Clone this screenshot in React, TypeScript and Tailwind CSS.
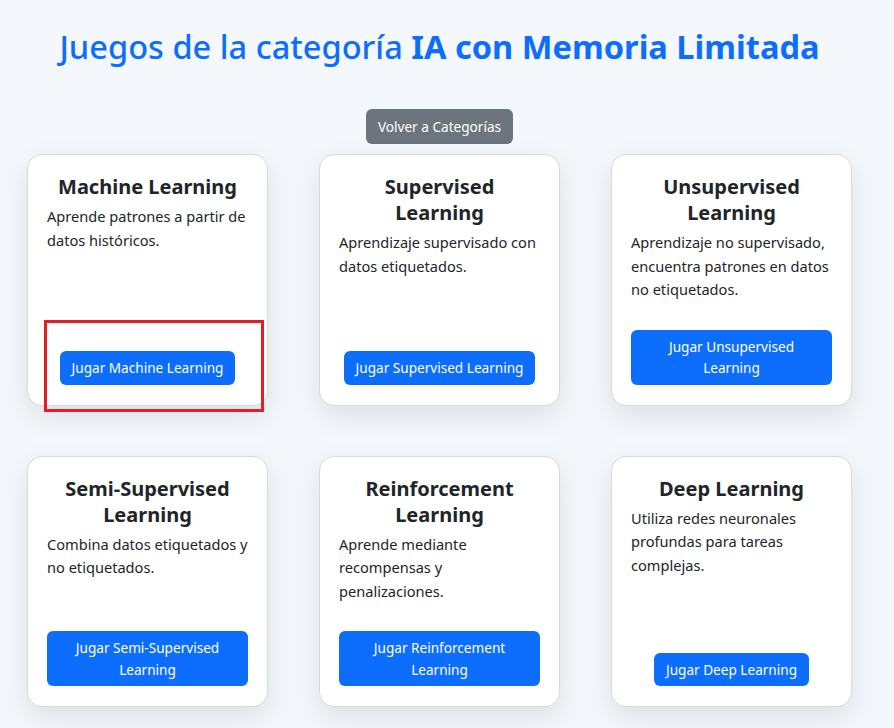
const games = [
  {
    title: 'Machine Learning',
    text: 'Aprende patrones a partir de datos históricos.',
    button: 'Jugar Machine Learning',
  },
  {
    title: 'Supervised Learning',
    text: 'Aprendizaje supervisado con datos etiquetados.',
    button: 'Jugar Supervised Learning',
  },
  {
    title: 'Unsupervised Learning',
    text: 'Aprendizaje no supervisado, encuentra patrones en datos no etiquetados.',
    button: 'Jugar Unsupervised Learning',
  },
  {
    title: 'Semi-Supervised Learning',
    text: 'Combina datos etiquetados y no etiquetados.',
    button: 'Jugar Semi-Supervised Learning',
  },
  {
    title: 'Reinforcement Learning',
    text: 'Aprende mediante recompensas y penalizaciones.',
    button: 'Jugar Reinforcement Learning',
  },
  {
    title: 'Deep Learning',
    text: 'Utiliza redes neuronales profundas para tareas complejas.',
    button: 'Jugar Deep Learning',
  },
]

function GameCard({ title, text, button }: { title: string; text: string; button: string }) {
  return (
    <div className="flex flex-col rounded-[15px] border border-[#d9d9d9] bg-white px-[19px] pt-[19px] pb-[20px] shadow-[0_10px_28px_rgba(0,0,0,0.10)]">
      <h5 className="mb-[5px] text-center text-[20px] font-bold leading-[26px] text-[#212529]">{title}</h5>
      <p className="mb-[28px] text-[14.6px] leading-[23.5px] text-[#212529]">{text}</p>
      <div className="mt-auto text-center">
        <button
          type="button"
          className="rounded-[6px] bg-[#0d6efd] px-[12px] py-[6px] text-[13.6px] leading-[21.5px] text-white"
        >
          {button}
        </button>
      </div>
    </div>
  )
}

function App() {
  return (
    <div
      className="relative min-h-screen bg-[#f4f8fc] pt-[26px]"
      style={{ fontFamily: '"Noto Sans", "Open Sans", sans-serif' }}
    >
      <div className="w-[879px]">
        <h1 className="text-center text-[32.6px] leading-[42px] font-medium text-[#0d6efd]">
          Juegos de la categoría <strong className="font-bold">IA con Memoria Limitada</strong>
        </h1>

        <div className="mt-[41px] flex justify-center">
          <button
            type="button"
            className="rounded-[6px] bg-[#6c757d] px-[12px] py-[7px] text-[13.6px] leading-[21px] text-white"
          >
            Volver a Categorías
          </button>
        </div>

        <div className="mt-[10px] grid grid-cols-[241px_241px_241px] gap-x-[51px] gap-y-[50px] pl-[27px] pb-[40px]">
          {games.map((game) => (
            <GameCard key={game.title} {...game} />
          ))}
        </div>
      </div>

      <div className="pointer-events-none absolute top-[320px] left-[44px] h-[92px] w-[220px] border-[3px] border-[#e41e26]" />
    </div>
  )
}

export default App
